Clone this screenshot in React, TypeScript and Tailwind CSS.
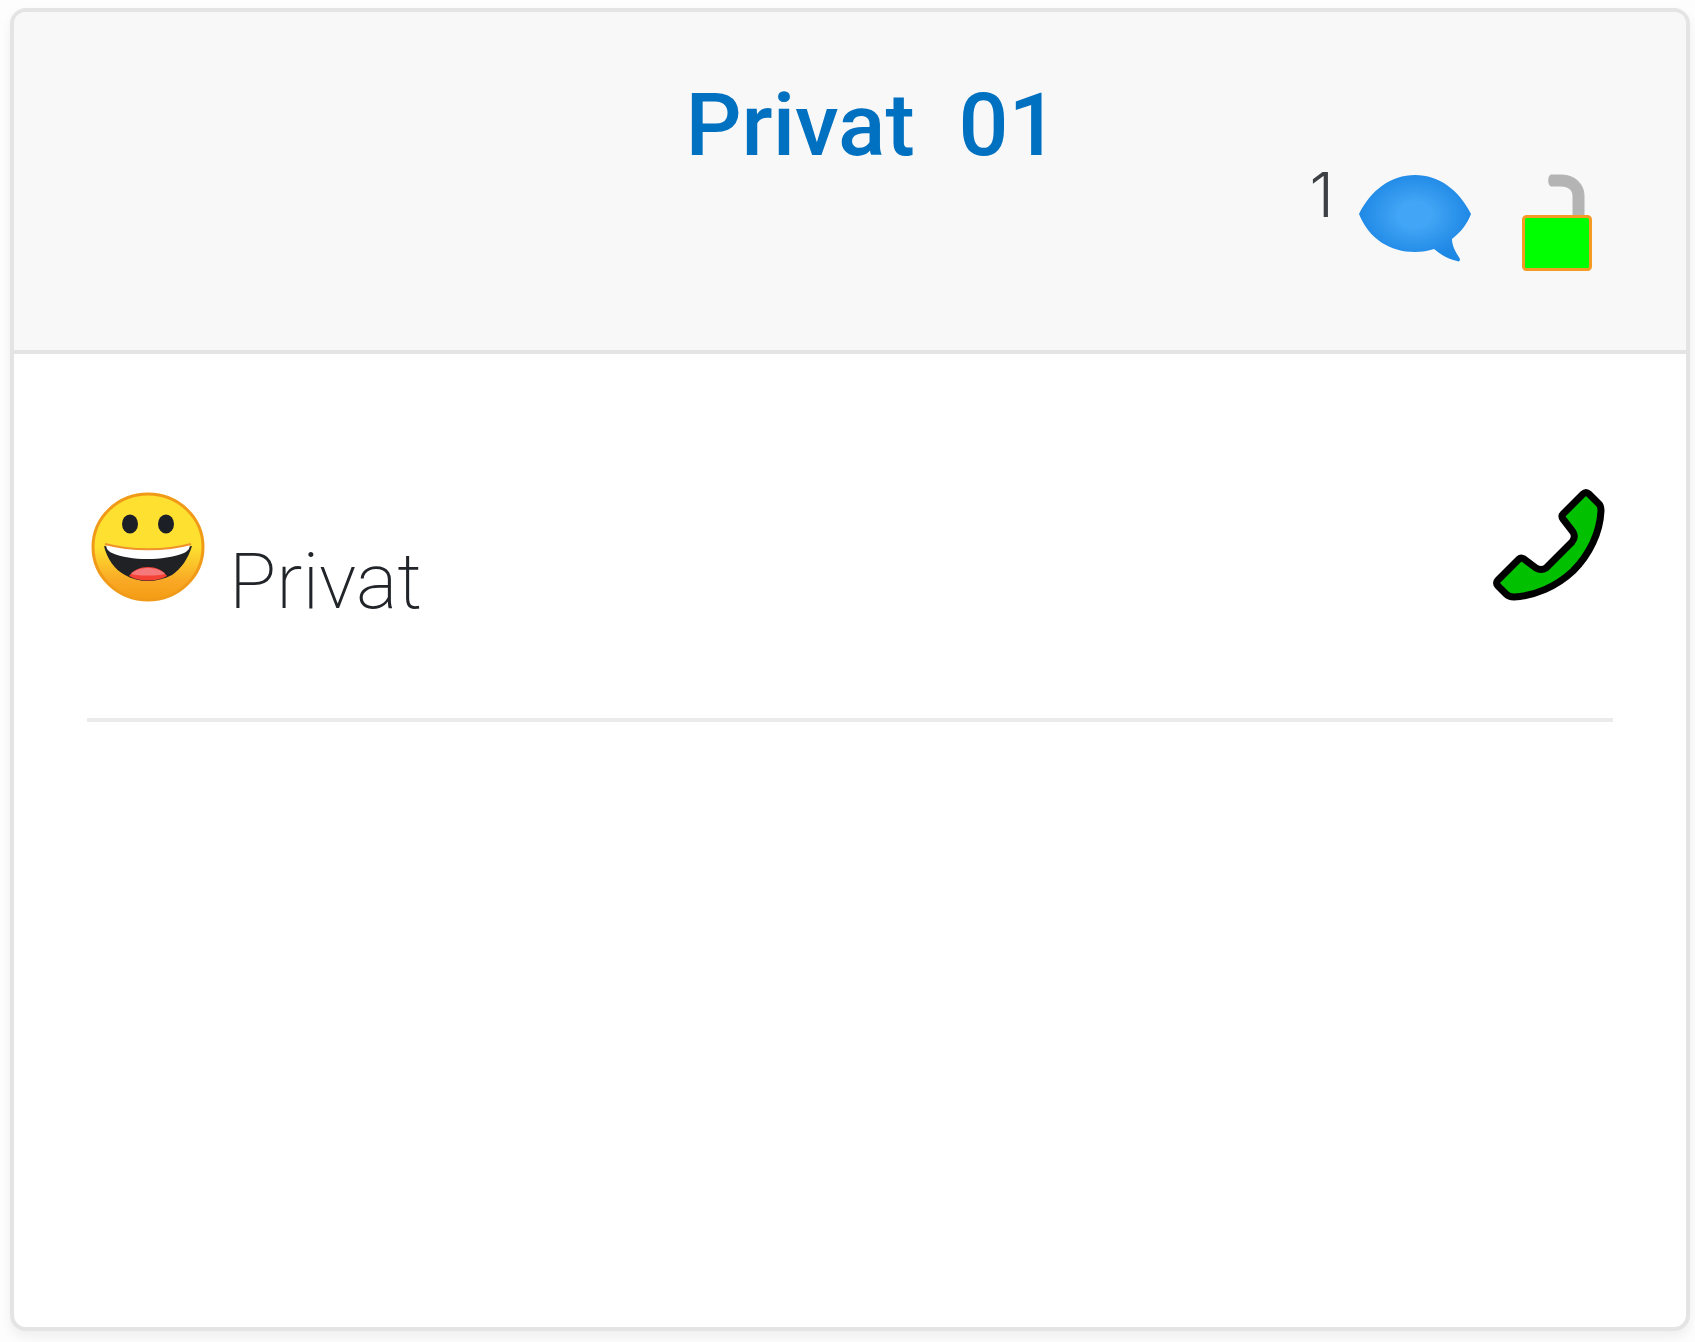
import React from "react";

function SpeechBubbleIcon() {
    return (
        <svg viewBox="0 0 114 88" className="w-[114px] h-[88px]" aria-hidden="true">
            <defs>
                <radialGradient id="bubble" cx="50%" cy="46%" r="50%">
                    <stop offset="0.3" stopColor="#42a5f5" />
                    <stop offset="1" stopColor="#1e88e5" />
                </radialGradient>
            </defs>
            <path
                d="M1 40C13 16 33 1 57 1S101 16 113 40C109 50 103 58 94 65C94 73 99 80 102 85C102 87 101 88 99 87C90 85 83 81 76 75C70 77 64 78 57 78C32 78 11 65 1 40Z"
                fill="url(#bubble)"
            />
        </svg>
    );
}

function UnlockIcon() {
    return (
        <svg viewBox="0 0 70 98" className="w-[70px] h-[98px]" aria-hidden="true">
            <path d="M29 1H39C54 1 62 11 62 22V44H51V22C51 16 46 12 39 12H29C26 12 26 1 29 1Z" fill="#b4b4b4" stroke="#b4b4b4" strokeLinejoin="round" />
            <rect x="1.5" y="42.5" width="67" height="53" rx="3" fill="#00ff00" stroke="#f59a23" strokeWidth="3" />
        </svg>
    );
}

function SmileIcon() {
    return (
        <svg viewBox="0 0 114 112" className="w-[114px] h-[112px]" aria-hidden="true">
            <defs>
                <linearGradient id="face" x1="0" y1="0" x2="0" y2="1">
                    <stop offset="0.5" stopColor="#fde030" />
                    <stop offset="0.82" stopColor="#f9a825" />
                    <stop offset="1" stopColor="#f49c14" />
                </linearGradient>
            </defs>
            <ellipse cx="57" cy="57" rx="55" ry="53" fill="url(#face)" stroke="#f19a18" strokeWidth="3" />
            <ellipse cx="39" cy="34" rx="8" ry="9.5" fill="#1c1f26" />
            <ellipse cx="75" cy="34" rx="8" ry="9.5" fill="#1c1f26" />
            <path d="M13 56C40 61 75 61 101 56C97 69 90 79 81 85C65 93 48 93 34 85C24 80 16 69 13 56Z" fill="#202124" />
            <path d="M16 54C40 61 75 61 98 54C100 58 97 61 93 63C72 71 40 71 21 63C17 61 14 58 16 54Z" fill="#fff" />
            <path d="M14 54C40 61 75 61 100 54" fill="none" stroke="#f0912a" strokeWidth="2" />
            <path d="M38 86C46 74 68 74 76 86C66 92 48 92 38 86Z" fill="#f44336" />
            <path d="M40 84C48 76 66 76 74 84C66 86 48 86 40 84Z" fill="#f5787a" />
        </svg>
    );
}

function PhoneIcon() {
    return (
        <svg viewBox="0 0 112 112" className="w-28 h-28 overflow-visible" aria-hidden="true">
            <path
                d="M90 4Q93 1 96 4L106 14Q108 16 108 21C107 42 97 64 80 81C63 97 41 106 21 107Q16 107 13 104L5 96Q2 93 5 90L26 69Q28 67 31 69L43 78Q48 81 53 78L79 52Q83 47 80 42L70 29Q68 26 70 24Z"
                fill="#00c000"
                stroke="#000"
                strokeWidth="7"
                strokeLinejoin="round"
            />
        </svg>
    );
}

export default function App() {
    return (
        <div className="h-screen bg-[#fdfdfd] pt-2 pr-[5px] pb-[11px] pl-2.5 text-[#212529]">
            <section className="flex h-full flex-col rounded-2xl border-4 border-[#e4e4e4] bg-white shadow-[0_6px_12px_rgba(0,0,0,0.06)]">
                <header className="border-b-4 border-[#e4e4e4] bg-[#f8f8f8] rounded-t-xl px-20 pt-[63px] pb-[78px]">
                    <h1 className="pl-11 text-center whitespace-pre font-['Roboto',sans-serif] text-[88px] leading-[99px] font-medium text-[#0070c0]">
                        {"Privat  01"}
                    </h1>
                    <div className="flex items-start justify-end pr-[14px]">
                        <button type="button" className="flex items-start gap-6" aria-label="1 message">
                            <span className="font-['Inter',sans-serif] text-[62px] leading-[42px] font-light text-[#3c4044]">1</span>
                            <SpeechBubbleIcon />
                        </button>
                        <button type="button" className="ml-[50px]" aria-label="Unlocked">
                            <UnlockIcon />
                        </button>
                    </div>
                </header>

                <ul className="px-[73px] pt-[136px]">
                    <li className="flex items-start justify-between border-b-4 border-[#ebebeb] pb-[86px] pl-1 pr-2">
                        <div className="flex items-start gap-6">
                            <SmileIcon />
                            <span className="pt-[42px] font-['Roboto',sans-serif] text-[78px] leading-[100px] font-extralight">Privat</span>
                        </div>
                        <button type="button" aria-label="Call">
                            <PhoneIcon />
                        </button>
                    </li>
                </ul>
            </section>
        </div>
    );
}
